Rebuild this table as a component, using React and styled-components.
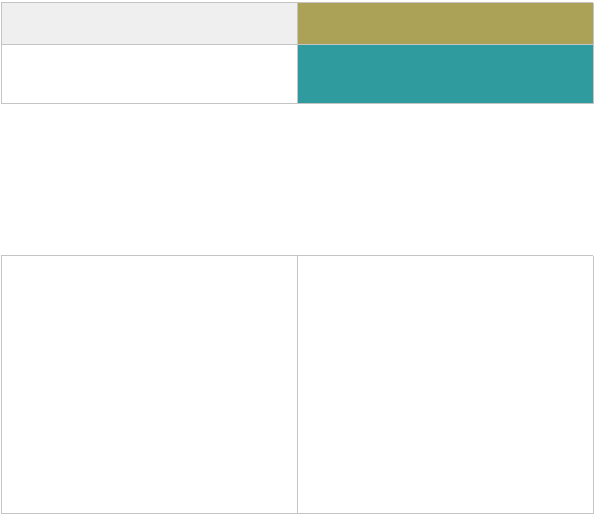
import React from "react";
import styled, { createGlobalStyle } from "styled-components";

const GlobalStyle = createGlobalStyle`
  html, body {
    margin: 0;
    padding: 0;
    background: #fff;
    font-family: "Liberation Sans", Arial, sans-serif;
  }
`;

const Page = styled.div`
  padding: 2px 1px 0 1px;
  width: 592px;
`;

const Grid = styled.div`
  display: grid;
  grid-template-columns: 296px 296px;
  grid-template-rows: ${(p) => p.$rows};
  border-top: 1px solid #c4c4c4;
  border-left: 1px solid #c4c4c4;
  margin-top: ${(p) => p.$top || 0}px;
`;

const Cell = styled.div`
  background: ${(p) => p.$bg || "#fff"};
  border-right: 1px solid #c4c4c4;
  border-bottom: 1px solid #c4c4c4;
`;

function App() {
  return (
    <>
      <GlobalStyle />
      <Page>
        <Grid $rows="42px 59px">
          <Cell $bg="#efefef" />
          <Cell $bg="#aba157" />
          <Cell />
          <Cell $bg="#2f9b9f" />
        </Grid>
        <Grid $rows="258px" $top={151}>
          <Cell />
          <Cell />
        </Grid>
      </Page>
    </>
  );
}

export default App;
